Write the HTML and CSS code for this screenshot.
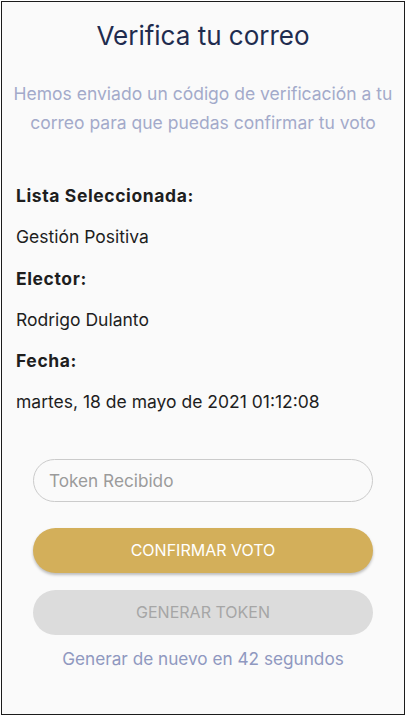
FILE: index.html
```html
<!DOCTYPE html>
<html lang="es">
<head>
<meta charset="utf-8">
<title>Verifica tu correo</title>
<link rel="stylesheet" href="styles.css">
</head>
<body>
<div class="frame">
  <h1 class="title">Verifica tu correo</h1>
  <p class="subtitle">Hemos enviado un código de verificación a tu correo para que puedas confirmar tu voto</p>
  <div class="details">
    <div class="label">Lista Seleccionada:</div>
    <div class="value">Gestión Positiva</div>
    <div class="label">Elector:</div>
    <div class="value">Rodrigo Dulanto</div>
    <div class="label">Fecha:</div>
    <div class="value">martes, 18 de mayo de 2021 01:12:08</div>
  </div>
  <div class="actions">
    <input class="token" type="text" placeholder="Token Recibido">
    <button class="btn btn-primary">CONFIRMAR VOTO</button>
    <button class="btn btn-disabled">GENERAR TOKEN</button>
    <div class="countdown">Generar de nuevo en 42 segundos</div>
  </div>
</div>
</body>
</html>
```
FILE: styles.css
```css
html, body {
  margin: 0;
  padding: 0;
  background: #ffffff;
}
body {
  font-family: Inter, "Noto Sans", sans-serif;
}
.frame {
  box-sizing: border-box;
  margin: 1px 0 0 1px;
  width: 404px;
  height: 714px;
  border: 1px solid #1c1c1c;
  background: #fafafa;
  display: flex;
  flex-direction: column;
}
.title {
  margin: 18.5px 0 0;
  font-size: 26px;
  line-height: 30px;
  font-weight: 400;
  text-align: center;
  color: #1f2c4f;
}
.subtitle {
  margin: 28.6px 0 0;
  padding: 0 4px;
  font-size: 17.5px;
  line-height: 29px;
  text-align: center;
  color: #a3aaca;
}
.details {
  margin: 38px 0 0;
  padding: 0 14px;
  line-height: 41.2px;
  color: #1e1e1e;
}
.label {
  font-size: 17.5px;
  font-weight: 700;
  letter-spacing: 0.6px;
}
.value {
  font-size: 17.5px;
  font-weight: 400;
}
.actions {
  margin: 36.6px 31px 0;
  display: flex;
  flex-direction: column;
}
.token {
  box-sizing: border-box;
  height: 43px;
  width: 100%;
  border: 1px solid #cbcbcb;
  border-radius: 22px;
  background: #fafafa;
  padding: 0 15px;
  font-family: Inter, "Noto Sans", sans-serif;
  font-size: 17.2px;
  color: #333;
  outline: none;
}
.token::placeholder {
  color: #9b9b9b;
}
.btn {
  box-sizing: border-box;
  height: 45px;
  width: 100%;
  border: none;
  border-radius: 23px;
  font-family: Inter, "Noto Sans", sans-serif;
  font-size: 16px;
}
.btn-primary {
  margin-top: 26px;
  background: #d3af5a;
  color: #ffffff;
  box-shadow: 0 2px 3px rgba(0, 0, 0, 0.25);
}
.btn-disabled {
  margin-top: 17px;
  background: #dcdcdc;
  color: #a6a6a6;
}
.countdown {
  margin-top: 14.5px;
  font-size: 17.2px;
  line-height: 20px;
  text-align: center;
  color: #8f98c0;
}
```
